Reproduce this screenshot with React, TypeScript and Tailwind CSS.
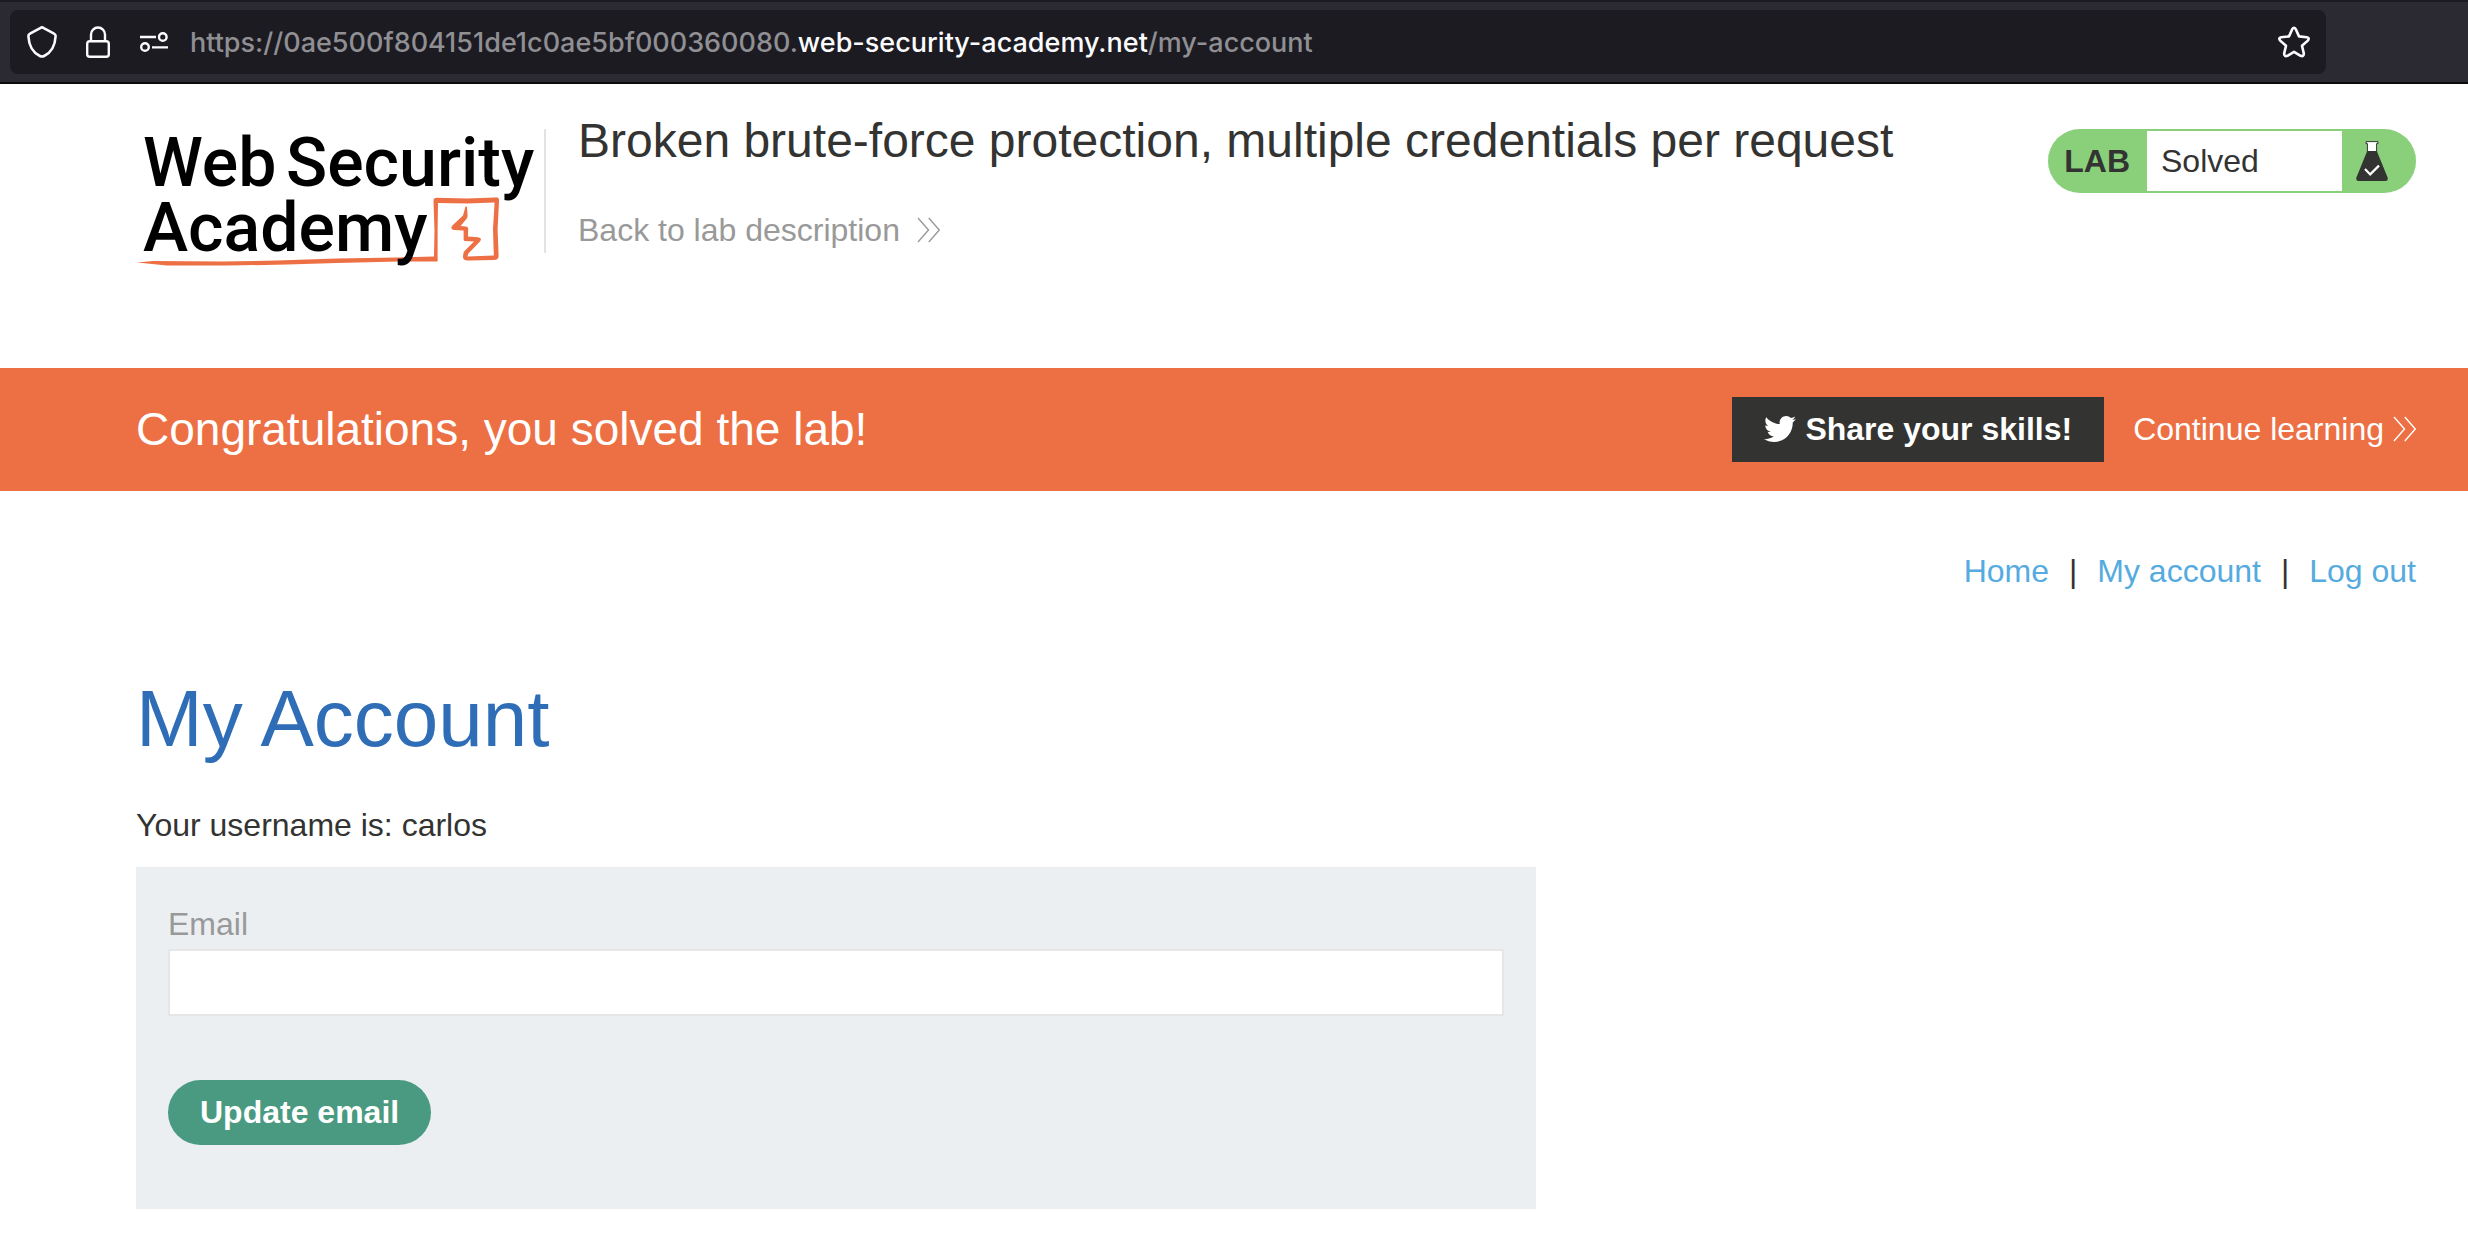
import React from 'react';
import { FaTwitter } from 'react-icons/fa';

function ShieldIcon() {
  return (
    <svg className="h-8 w-[30px]" viewBox="0 0 30 32" fill="none" stroke="#fbfbfe" strokeWidth="2.6" strokeLinejoin="round" aria-hidden="true">
      <path d="M15 1.4 C14.3 1.4 13.8 1.7 13.2 2.1 L3 7.6 C1.8 8.2 1.3 9 1.4 10.2 C1.9 19.5 4.8 26 12.9 30 C14.5 30.8 15.5 30.8 17.1 30 C25.2 26 28.1 19.5 28.6 10.2 C28.7 9 28.2 8.2 27 7.6 L16.8 2.1 C16.2 1.7 15.7 1.4 15 1.4 Z" />
    </svg>
  );
}

function LockIcon() {
  return (
    <svg className="h-8 w-6" viewBox="0 0 24 32" fill="none" stroke="#fbfbfe" strokeWidth="2.4" aria-hidden="true">
      <path d="M5 15 V8.5 A7 7 0 0 1 19 8.5 V15" />
      <rect x="1.2" y="15.2" width="21.6" height="15.6" rx="2.6" />
    </svg>
  );
}

function PermissionsIcon() {
  return (
    <svg className="h-5 w-7" viewBox="0 0 28 20" fill="none" stroke="#fbfbfe" strokeWidth="2.4" aria-hidden="true">
      <path d="M0 5 H16 M12 15.4 H28" />
      <circle cx="22.8" cy="5" r="3.8" />
      <circle cx="5" cy="15" r="3.8" />
    </svg>
  );
}

function StarIcon() {
  return (
    <svg className="h-8 w-8" viewBox="0 0 32 32" fill="none" stroke="#fbfbfe" strokeWidth="2.6" strokeLinejoin="round" aria-hidden="true">
      <path d="M14.2 3.2 Q16 0.4 17.8 3.2 L21 10.4 L28.8 11.2 Q32 12 29.8 14.6 L24 19.8 L25.8 27.4 Q26 31 22.6 29.8 L16 25.8 L9.4 29.8 Q6 31 6.2 27.4 L8 19.8 L2.2 14.6 Q0 12 3.2 11.2 L11 10.4 Z" />
    </svg>
  );
}

function DoubleChevron() {
  return (
    <svg className="h-[26px] w-6 shrink-0" viewBox="0 0 24 26" fill="none" stroke="currentColor" strokeWidth="1.4" aria-hidden="true">
      <path d="M2 1 L12.5 13 L2 25 M12.8 1 L23.3 13 L12.8 25" />
    </svg>
  );
}

function FlaskIcon() {
  return (
    <svg className="h-10 w-8" viewBox="0 0 32 40" aria-hidden="true">
      <path d="M10 0.6 H22 V2.6 H20.6 V11 H11.4 V2.6 H10 Z" fill="#fff" stroke="#333332" strokeWidth="1" />
      <path d="M11.2 10 H20.8 L31.6 36.6 Q32.6 40 29.4 40 H2.6 Q-0.6 40 0.4 36.6 Z" fill="#333332" />
      <path d="M9 28 L14.2 33.4 L23 24.6" fill="none" stroke="#fff" strokeWidth="2.2" />
    </svg>
  );
}

function AcademyLogo() {
  return (
    <svg className="h-[138px] w-[400px] shrink-0 overflow-visible" viewBox="0 0 400 138" role="img" aria-label="Web Security Academy">
      <g fill="#ed7044">
        <path d="M0 133.5 L16 132 L84 132.4 L140 131.6 L200 129.6 L260 128.6 L297 127.6 L297.5 102 L296.5 72 Q296.5 68.6 300 68.8 L330 69.4 L358 68.4 Q362.6 68 362 72.4 L360.6 100 L361.6 127 Q361.8 131 357 131 L332 131.4 Q325.4 132 326 127 L326.6 123.6 Q327 122.4 328 121.4 L337 112.6 L327.6 112 Q326.6 111.8 326.6 110 L326.6 101.4 L317 101 Q312.6 100.6 315.4 96.4 L326 86.4 L328.4 78 Q329 76.6 330 78 L330.6 87 Q330.4 89 329 90.6 L323.6 97 L329 97.6 Q331.2 98 331.2 99.8 L331 107.6 L341 108.2 Q345.6 108.8 343 112.4 L331.4 124.4 L330.4 127.6 L356.8 126.6 L356 100 L357.6 73.4 L330 74.4 L301 74 L300.6 102 L300.6 132.6 L262 132.6 L200 134 L150 135.6 L90 136.6 L30 136.4 Z" />
      </g>
      <g fill="#000" fontFamily="Roboto, sans-serif" fontSize="68" fontWeight="500">
        <text x="6" y="57">Web</text>
        <text x="149" y="57">Security</text>
        <text x="6" y="122">Academy</text>
      </g>
    </svg>
  );
}

function BrowserBar() {
  return (
    <div className="border-t-2 border-b-2 border-t-[#1c1b22] border-b-[#0c0c0d] bg-[#2b2a33] py-2 pr-[142px] pl-2.5">
      <div className="flex h-16 items-center rounded-lg bg-[#1c1b22] pr-4 pl-[17px]">
        <button type="button" aria-label="Tracking protection" className="mr-[29px]"><ShieldIcon /></button>
        <button type="button" aria-label="Connection security" className="mr-[30px]"><LockIcon /></button>
        <button type="button" aria-label="Site permissions" className="mr-[22px]"><PermissionsIcon /></button>
        <p className="flex-1 pt-0.5 font-[Inter,sans-serif] text-[27px] leading-9 font-medium whitespace-nowrap text-[#8f8f94]">
          https://0ae500f804151de1c0ae5bf000360080.<span className="text-[#fbfbfe]">web-security-academy.net</span>/my-account
        </p>
        <button type="button" aria-label="Bookmark this page"><StarIcon /></button>
      </div>
    </div>
  );
}

export default function App() {
  return (
    <div className="min-h-screen bg-white font-['Liberation_Sans',Arial,sans-serif] text-[32px] leading-10 text-[#333332]">
      <BrowserBar />

      <header className="flex items-start pt-[29px] pr-[52px] pb-[101px] pl-[137px]">
        <a href="#academy" className="mt-4 block"><AcademyLogo /></a>
        <div className="mt-4 ml-[7px] h-[124px] w-0.5 bg-[#e3e3e3]" />
        <div className="ml-8 flex-1">
          <h2 className="text-[48px] leading-14">Broken brute-force protection, multiple credentials per request</h2>
          <a href="#lab" className="mt-[41px] inline-flex items-center gap-4 text-[#999]">
            Back to lab description <DoubleChevron />
          </a>
        </div>
        <div className="mt-4 flex h-16 items-stretch overflow-hidden rounded-full border-y-2 border-[#8ad07b] bg-[#8ad07b]">
          <span className="flex items-center pr-[17px] pl-4 font-bold">LAB</span>
          <span className="flex w-[195px] items-center bg-white pl-3.5">Solved</span>
          <span className="flex items-center pr-7 pl-3.5"><FlaskIcon /></span>
        </div>
      </header>

      <section className="flex items-center bg-[#ed7044] py-[29px] pr-[52px] pl-[136px] text-white">
        <h4 className="flex-1 pb-0.5 text-[46px] leading-14">Congratulations, you solved the lab!</h4>
        <button type="button" className="flex h-[65px] items-center gap-[9px] bg-[#333332] px-8 pb-0.5 font-bold">
          <FaTwitter className="size-8" aria-hidden="true" />
          Share your skills!
        </button>
        <a href="#next" className="ml-[29px] flex items-center gap-2 pb-0.5">
          Continue learning <DoubleChevron />
        </a>
      </section>

      <main className="pt-[60px] pr-[52px] pl-[136px]">
        <nav className="flex justify-end gap-5">
          <a href="#home" className="text-[#55abe0]">Home</a>
          <span>|</span>
          <a href="#my-account" className="text-[#55abe0]">My account</a>
          <span>|</span>
          <a href="#logout" className="text-[#55abe0]">Log out</a>
        </nav>
        <h1 className="mt-20 text-[80px] leading-24 text-[#2f6eb7]">My Account</h1>
        <p className="mt-[38px]">Your username is: carlos</p>
        <form className="mt-[22px] max-w-[1400px] bg-[#ebeff2] px-8 pt-[37px] pb-16" onSubmit={(e) => e.preventDefault()}>
          <label htmlFor="email" className="block text-[#999]">Email</label>
          <input id="email" type="email" className="mt-[5px] block h-[67px] w-full border-2 border-[#e6e6e6] bg-white px-3 outline-none" />
          <button type="submit" className="mt-16 block h-[65px] rounded-full bg-[#499a81] px-8 pb-0.5 font-bold text-white">Update email</button>
        </form>
      </main>
    </div>
  );
}
